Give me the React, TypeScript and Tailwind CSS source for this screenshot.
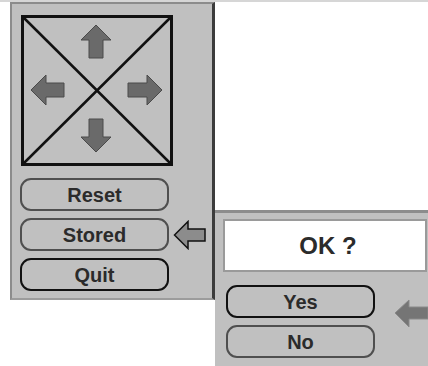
import React from "react";

const font = { fontFamily: '"Liberation Sans", Arial, sans-serif' };

interface PillProps {
  label: string;
  active?: boolean;
  width: string;
}

const Pill: React.FC<PillProps> = ({ label, active, width }) => (
  <div
    className={`${width} h-[33px] rounded-[11px] flex items-center justify-center text-[20px] font-bold text-[#2b2b2b] bg-[#c0c0c0] ${
      active ? "border-[2.5px] border-[#111]" : "border-2 border-[#4f4f4f]"
    }`}
  >
    {label}
  </div>
);

const DirectionBox = () => (
  <svg width="152" height="151" viewBox="0 0 152 151">
    <rect x="1.5" y="1.5" width="149" height="148" fill="#c0c0c0" stroke="#111" strokeWidth="3" />
    <line x1="2" y1="2" x2="150" y2="149" stroke="#111" strokeWidth="2.5" />
    <line x1="150" y1="2" x2="2" y2="149" stroke="#111" strokeWidth="2.5" />
    <g fill="#6a6a6a" stroke="#4a4a4a" strokeWidth="1" strokeLinejoin="round">
      <polygon points="75,10 90,25 82,25 82,43 68,43 68,25 60,25" />
      <polygon points="75,137 90,122 82,122 82,104 68,104 68,122 60,122" />
      <polygon points="10,75 25,60 25,68 43,68 43,82 25,82 25,90" />
      <polygon points="141,75 126,60 126,68 107,68 107,82 126,82 126,90" />
    </g>
  </svg>
);

const OutlineArrow = () => (
  <svg width="34" height="30" viewBox="0 0 34 30">
    <polygon
      points="1.5,15 15,1.5 15,9 32,9 32,21 15,21 15,28.5"
      fill="#8c8c8c"
      stroke="#111"
      strokeWidth="1.5"
      strokeLinejoin="miter"
    />
  </svg>
);

const SolidArrow = () => (
  <svg width="34" height="30" viewBox="0 0 34 30">
    <polygon points="1,14 15,1 15,8 34,8 34,20 15,20 15,28" fill="#757575" stroke="#8a8a8a" strokeWidth="1" />
  </svg>
);

export default function App() {
  return (
    <div className="w-[428px] h-[366px] bg-white overflow-hidden" style={font}>
      <div className="h-[2px] bg-[#d6d6d6]" />
      <div className="flex items-start">
        <div className="ml-[10px] w-[206px] h-[298px] bg-[#c0c0c0] border-l-2 border-t-2 border-[#8c8c8c] border-r-[3px] border-r-[#3c3c3c] border-b-2 border-b-[#9c9c9c] pl-[9px] pt-[11px] flex flex-col">
          <DirectionBox />
          <div className="mt-[12px] flex flex-col gap-[7px] -ml-[1px]">
            <Pill label="Reset" width="w-[149px]" />
            <div className="flex items-center gap-[4px]">
              <Pill label="Stored" width="w-[149px]" />
              <OutlineArrow />
            </div>
            <Pill label="Quit" width="w-[149px]" active />
          </div>
        </div>
        <div className="mt-[208px] flex-1 h-[160px] bg-[#c0c0c0] border-t-[3px] border-[#8c8c8c] pl-[8px] pt-[6px]">
          <div className="h-[53px] mr-[1px] bg-white border-2 border-[#9a9a9a] flex items-center justify-center pl-[6px]">
            <span className="text-[24px] text-[#2b2b2b] font-bold">OK ?</span>
          </div>
          <div className="mt-[13px] ml-[3px] flex items-start">
            <div className="flex flex-col gap-[7px]">
              <Pill label="Yes" width="w-[149px]" active />
              <Pill label="No" width="w-[149px]" />
            </div>
            <div className="ml-[19px] mt-[14px]">
              <SolidArrow />
            </div>
          </div>
        </div>
      </div>
    </div>
  );
}
